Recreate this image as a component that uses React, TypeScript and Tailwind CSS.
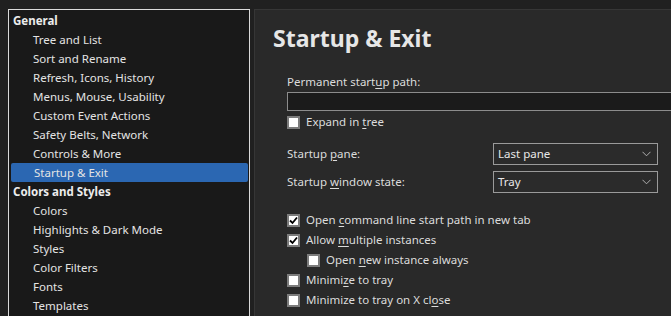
import React from "react";

const font = { fontFamily: '"Noto Sans", "Segoe UI", sans-serif' };

function U({ children }: { children: React.ReactNode }) {
  return <span className="underline underline-offset-[2px] decoration-[1px]">{children}</span>;
}

function Check({ checked }: { checked?: boolean }) {
  return (
    <div className="w-[13px] h-[13px] border-2 border-[#7c7c7c] bg-white flex items-center justify-center shrink-0">
      {checked && (
        <svg width="9" height="9" viewBox="0 0 9 9">
          <path d="M1 4.5 L3.5 7 L8 1.5" fill="none" stroke="#000" strokeWidth="1.8" />
        </svg>
      )}
    </div>
  );
}

function CheckRow({ checked, children, indent }: { checked?: boolean; children: React.ReactNode; indent?: boolean }) {
  return (
    <div className={`h-[20px] flex items-center gap-[6px] ${indent ? "pl-[20px]" : ""}`}>
      <Check checked={checked} />
      <span className="text-[11.5px] text-[#dcdcdc] leading-none">{children}</span>
    </div>
  );
}

function Select({ value }: { value: string }) {
  return (
    <div className="w-[165px] h-[22px] border border-[#9a9a9a] bg-[#2b2b2b] flex items-center justify-between pl-[4px] pr-[6px]">
      <span className="text-[11.5px] text-[#e8e8e8] leading-none">{value}</span>
      <svg width="9" height="6" viewBox="0 0 9 6">
        <path d="M0.5 0.8 L4.5 4.8 L8.5 0.8" fill="none" stroke="#b0b0b0" strokeWidth="1" />
      </svg>
    </div>
  );
}

const tree: { label: string; header?: boolean; selected?: boolean }[] = [
  { label: "General", header: true },
  { label: "Tree and List" },
  { label: "Sort and Rename" },
  { label: "Refresh, Icons, History" },
  { label: "Menus, Mouse, Usability" },
  { label: "Custom Event Actions" },
  { label: "Safety Belts, Network" },
  { label: "Controls & More" },
  { label: "Startup & Exit", selected: true },
  { label: "Colors and Styles", header: true },
  { label: "Colors" },
  { label: "Highlights & Dark Mode" },
  { label: "Styles" },
  { label: "Color Filters" },
  { label: "Fonts" },
  { label: "Templates" },
];

export default function App() {
  return (
    <div style={font} className="w-[671px] h-[316px] bg-[#202020] flex pt-[9px] pl-[8px] overflow-hidden">
      <div className="w-[242px] shrink-0 border border-b-0 border-[#dadada] bg-[#191919] pt-[1px] px-[1px]">
        {tree.map((t) => (
          <div
            key={t.label}
            className={`h-[19px] flex items-center text-[11.5px] leading-none ${
              t.header ? "pl-[3px] font-bold text-[#ececec]" : "pl-[23px] text-[#e4e4e4]"
            } ${t.selected ? "bg-[#2b67b2] rounded-[2px] ml-[1px] pl-[22px]" : ""}`}
          >
            {t.label}
          </div>
        ))}
      </div>
      <div className="ml-[4px] flex-1 bg-[#292929] border-l border-t border-[#363636] pt-[12px] pl-[18px] overflow-hidden">
        <div className="h-[32px] leading-[32px] text-[23px] font-bold text-[#e6e6e6]">Startup &amp; Exit</div>
        <div className="pl-[14px]">
          <div className="mt-[20px] h-[16px] flex items-center text-[11.5px] text-[#dcdcdc] leading-none">
            <span>
              Permanent start<U>u</U>p path:
            </span>
          </div>
          <div className="mt-[2px] h-[19px] w-[420px] border border-[#8c8c8c] bg-[#1b1b1b]" />
          <div className="mt-[1px]">
            <CheckRow>
              Expand in <U>t</U>ree
            </CheckRow>
          </div>
          <div className="mt-[11px] h-[22px] flex items-center">
            <span className="w-[206px] text-[11.5px] text-[#dcdcdc] leading-none">
              Startup <U>p</U>ane:
            </span>
            <Select value="Last pane" />
          </div>
          <div className="mt-[6px] h-[22px] flex items-center">
            <span className="w-[206px] text-[11.5px] text-[#dcdcdc] leading-none">
              Startup <U>w</U>indow state:
            </span>
            <Select value="Tray" />
          </div>
          <div className="mt-[17px]">
            <CheckRow checked>
              Open <U>c</U>ommand line start path in new tab
            </CheckRow>
            <CheckRow checked>
              Allow <U>m</U>ultiple instances
            </CheckRow>
            <CheckRow indent>
              Open <U>n</U>ew instance always
            </CheckRow>
            <CheckRow>
              Minimi<U>z</U>e to tray
            </CheckRow>
            <CheckRow>
              Minimize to tray on X cl<U>o</U>se
            </CheckRow>
          </div>
        </div>
      </div>
    </div>
  );
}
